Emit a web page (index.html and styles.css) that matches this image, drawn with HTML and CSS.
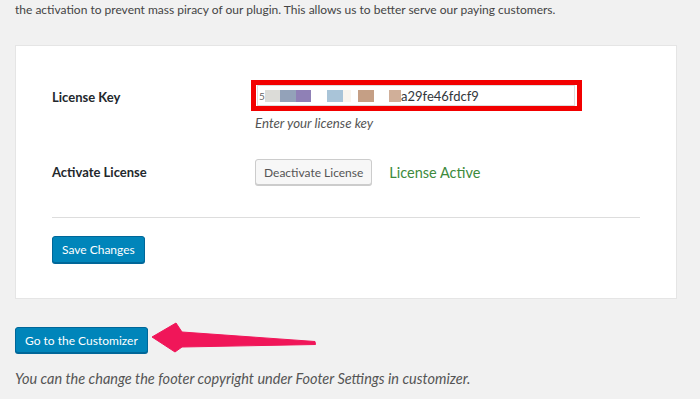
FILE: index.html
```html
<!DOCTYPE html>
<html>
<head>
<meta charset="utf-8">
<link rel="stylesheet" href="styles.css">
</head>
<body>
<div class="page">
  <p class="intro">the activation to prevent mass piracy of our plugin. This allows us to better serve our paying customers.</p>
  <div class="card">
    <div class="row row-key">
      <div class="label">License Key</div>
      <div class="field">
        <div class="highlight">
          <div class="input">
            <span class="k-digit">5</span><span class="blk b1"></span><span class="blk b2"></span><span class="blk b3"></span><span class="gap g1"></span><span class="blk b4"></span><span class="blk b5"></span><span class="gap g2"></span><span class="blk b6"></span><span class="gap g3"></span><span class="blk b7"></span><span class="k-text">a29fe46fdcf9</span>
          </div>
        </div>
        <div class="desc">Enter your license key</div>
      </div>
    </div>
    <div class="row row-activate">
      <div class="label">Activate License</div>
      <div class="field inline">
        <button class="btn btn-secondary">Deactivate License</button>
        <span class="status">License Active</span>
      </div>
    </div>
    <hr class="sep">
    <button class="btn btn-primary save">Save Changes</button>
  </div>
  <div class="customizer">
    <button class="btn btn-primary">Go to the Customizer</button>
    <svg class="arrow" width="175" height="40" viewBox="0 0 175 40">
      <path d="M2 19 L26 5 L32 14 L165 23.5 L165.5 26.5 L32 29 L25 34 Z" fill="#f01659" stroke="#f01659" stroke-width="1" stroke-linejoin="round"/>
    </svg>
  </div>
  <p class="footer-note">You can the change the footer copyright under Footer Settings in customizer.</p>
</div>
</body>
</html>
```

FILE: styles.css
```css
html, body {
  margin: 0;
  padding: 0;
  background: #f1f1f1;
}
body {
  font-family: Lato, "Open Sans", sans-serif;
  font-size: 13px;
  color: #444;
  width: 700px;
  height: 399px;
  overflow: hidden;
}
.page {
  padding: 0 23px 0 15px;
  position: relative;
}
.intro {
  margin: 0;
  padding-top: 1px;
  line-height: 18px;
  font-size: 12px;
  color: #444;
}
.card {
  margin-top: 26px;
  background: #fff;
  border: 1px solid #e5e5e5;
  padding: 34px 36px 34px 36px;
  height: 184px;
}
.row {
  display: flex;
}
.label {
  width: 199px;
  flex: none;
  font-weight: 700;
  color: #23282d;
}
.row-key .label {
  padding-top: 9px;
}
.field {
  display: flex;
  flex-direction: column;
}
.highlight {
  border: 5px solid #f20000;
  width: 321px;
  height: 21px;
}
.input {
  box-sizing: border-box;
  height: 21px;
  margin-left: 1px;
  width: 318px;
  border: 1px solid #ddd;
  display: flex;
  align-items: center;
  color: #32373c;
  font-size: 13px;
}
.k-digit {
  width: 6px;
  color: #666;
  font-size: 10px;
  margin-left: 1px;
}
.blk {
  display: inline-block;
  height: 12px;
}
.b1 { width: 15px; background: #dcdcd8; }
.b2 { width: 16px; background: #93a2b9; }
.b3 { width: 15px; background: #8f80b6; }
.g1 { width: 16px; }
.b4 { width: 16px; background: #a9c4d8; }
.b5 { width: 8px; background: #faf5ee; }
.g2 { width: 7px; }
.b6 { width: 16px; background: #c59f85; }
.g3 { width: 15px; }
.b7 { width: 12px; background: #d0af99; }
.gap { display: inline-block; }
.desc {
  font-style: italic;
  color: #555;
  font-size: 13.3px;
  margin-top: 4px;
  margin-left: 4px;
}
.row-activate {
  margin-top: 28px;
  align-items: center;
}
.field.inline {
  flex-direction: row;
  align-items: center;
  margin-left: 4px;
}
.btn {
  font-family: inherit;
  font-size: 12px;
  border-radius: 3px;
  padding: 0 9px;
  height: 27px;
  cursor: pointer;
}
.btn-secondary {
  background: #f7f7f7;
  border: 1px solid #ccc;
  color: #555;
  box-shadow: 0 1px 0 #ccc;
  height: 26px;
  padding: 0 8px;
}
.status {
  color: #3d8a3c;
  font-size: 14.5px;
  margin-left: 17px;
}
.sep {
  border: 0;
  border-top: 1px solid #ddd;
  margin: 32px 0 18px;
}
.btn-primary {
  background: #0085ba;
  border: 1px solid #006799;
  color: #fff;
  box-shadow: 0 1px 0 #006799;
}
.customizer {
  margin-top: 28px;
  position: relative;
  height: 27px;
}
.customizer .btn {
  height: 26px;
}
.arrow {
  position: absolute;
  left: 135px;
  top: -9px;
  overflow: visible;
}
.footer-note {
  margin: 16px 0 0;
  font-style: italic;
  color: #555;
  font-size: 14.5px;
}
```
